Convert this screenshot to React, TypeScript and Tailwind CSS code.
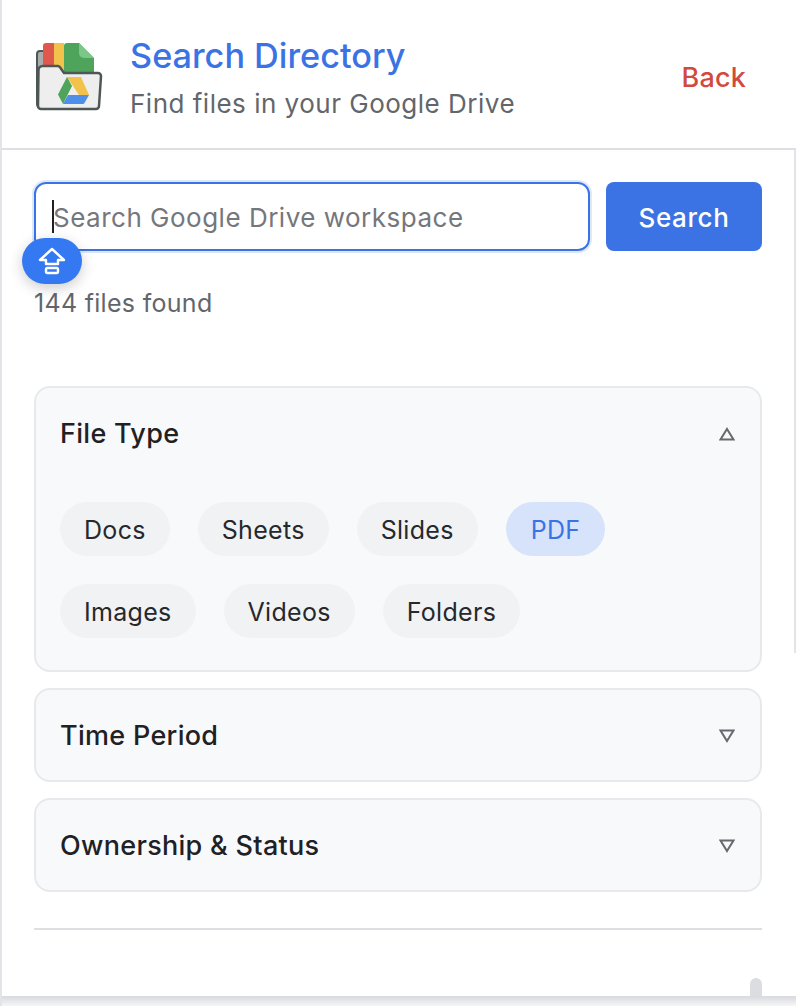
import React from "react";

function Logo() {
  return (
    <svg width="68" height="68" viewBox="0 0 68 68" className="shrink-0 mt-[5px]">
      <path d="M2 11a3 3 0 0 1 3-3h6v56H5a3 3 0 0 1-3-3z" fill="#a9adad" stroke="#4f5656" strokeWidth="2" />
      <path d="M8 3a3 3 0 0 1 3-3h8v32H8z" fill="#e0574b" />
      <rect x="19" y="0" width="10" height="32" fill="#f3c24a" />
      <path d="M29 3a3 3 0 0 1 3-3h12l15 15v17H29z" fill="#4ea45a" />
      <path d="M44 0l15 15H49a5 5 0 0 1-5-5z" fill="#7cc787" />
      <path d="M3.5 27a4 4 0 0 1 4-4h15a3 3 0 0 1 2.5 1.2l4 5.8h34a3 3 0 0 1 3 3l-2 30a3 3 0 0 1-3 3H6a3 3 0 0 1-3-3z" fill="#eeeeee" stroke="#4f5656" strokeWidth="2.5" />
      <path d="M32 34h14l8 18H44z" fill="#f3c24a" />
      <path d="M32 34l5 9-9 18-5-9.5z" fill="#4ea45a" />
      <path d="M33 52h21l-4.5 8a2 2 0 0 1-2 1H28z" fill="#4f8fe8" />
    </svg>
  );
}

function Chip({ label, active }: { label: string; active?: boolean }) {
  return (
    <span className={"h-[54px] pt-[3px] rounded-full flex items-center text-[25px] tracking-[0.3px] " + (active ? "px-[25px] bg-[#d6e3fa] text-[#3b73e4]" : "px-[24px] bg-[#f1f2f4] text-[#26282c]")}>
      {label}
    </span>
  );
}

function Section({ title, open, children }: { title: string; open?: boolean; children?: React.ReactNode }) {
  return (
    <div className="rounded-[16px] border-2 border-[#e8e9ed] bg-[#f8f9fb] px-[24px]">
      <div className="h-[90px] flex items-center justify-between">
        <span className="text-[27px] font-medium tracking-[0.3px] pt-[2px] text-[#1f2124]">{title}</span>
        <svg width="16" height="14" viewBox="0 0 16 14" className="mr-[1px] mt-[1px]">
          <path d={open ? "M8 2L14.5 12.5H1.5z" : "M8 12L14.5 1.5H1.5z"} fill="none" stroke="#66696e" strokeWidth="2" />
        </svg>
      </div>
      {children}
    </div>
  );
}

export default function App() {
  return (
    <div className="relative w-[796px] h-[1006px] bg-white overflow-hidden border-l-2 border-[#e3e4e8] font-['Inter',sans-serif]">
      <header className="h-[150px] border-b-2 border-[#dedfe3] pl-[33px] pr-[50px] flex items-center">
        <Logo />
        <div className="ml-[27px] flex-1">
          <div className="text-[34.25px] leading-[44px] font-medium text-[#3b73e4] mt-[6px]">Search Directory</div>
          <div className="mt-[10px] text-[26px] leading-[32px] tracking-[0.5px] text-[#62666b]">Find files in your Google Drive</div>
        </div>
        <span className="text-[27px] tracking-[0.2px] text-[#d14a3c] font-medium mt-[8px]">Back</span>
      </header>

      <main className="pl-[32px] pr-[34px] pt-[32px]">
        <div className="flex gap-[16px]">
          <div className="flex-1 h-[69px] rounded-[12px] border-2 border-[#3b73e4] ring-2 ring-[#dde8fb] flex items-center pl-[16px] text-[26px] tracking-[0.5px] text-[#74777b]">
            <span className="w-[2px] h-[33px] bg-[#1f2124]" />
            <span className="-ml-[1px] pt-[2px]">Search Google Drive workspace</span>
          </div>
          <button className="w-[156px] h-[69px] pt-[2px] rounded-[8px] bg-[#3b73e4] text-white text-[26px] tracking-[0.6px] font-medium">Search</button>
        </div>
        <div className="mt-[36px] text-[25px] leading-[32px] tracking-[0.3px] text-[#62666b]">144 files found</div>

        <div className="mt-[67px] flex flex-col gap-[16px]">
          <Section title="File Type" open>
            <div className="pt-[24px] pb-[32px]">
              <div className="flex gap-[28px]">
                <Chip label="Docs" />
                <Chip label="Sheets" />
                <Chip label="Slides" />
                <Chip label="PDF" active />
              </div>
              <div className="flex gap-[28px] mt-[28px]">
                <Chip label="Images" />
                <Chip label="Videos" />
                <Chip label="Folders" />
              </div>
            </div>
          </Section>
          <Section title="Time Period" />
          <Section title="Ownership & Status" />
        </div>
        <div className="mt-[36px] h-[2px] bg-[#dedfe3]" />
      </main>

      <div className="absolute left-[20px] top-[238px] w-[60px] h-[46px] rounded-full bg-[#3579f2] shadow-[0_4px_14px_rgba(0,0,0,0.2)] flex items-center justify-center">
        <svg width="28" height="28" viewBox="0 0 28 28" fill="none" stroke="white" strokeWidth="2.4" strokeLinejoin="round">
          <path d="M14 2L2 13h6v4h12v-4h6z" />
          <rect x="8" y="21" width="12" height="5" rx="1.5" />
        </svg>
      </div>
      <div className="absolute right-[0px] top-[150px] w-[2px] h-[503px] bg-[#e3e4e8]" />
      <div className="absolute left-[748px] top-[978px] w-[12px] h-[20px] rounded-t-full bg-[#dcdde1]" />
      <div className="absolute left-0 right-0 top-[996px] h-[10px] bg-gradient-to-b from-[#d8d9de] to-[#f6f6f7]" />
    </div>
  );
}
